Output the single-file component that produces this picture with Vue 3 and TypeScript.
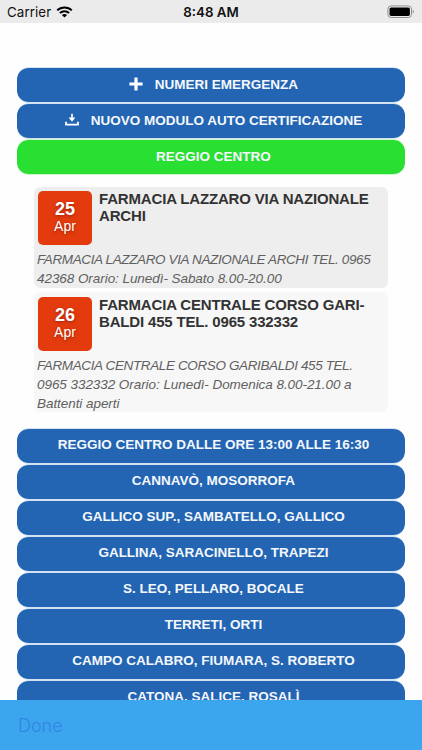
<script setup lang="ts">
interface Line {
  text: string
  tight?: boolean
}

interface Duty {
  day: string
  month: string
  title: string[]
  lines: Line[]
}

interface Action {
  label: string
  icon?: 'plus' | 'download'
  active?: boolean
}

const actions: Action[] = [
  { label: 'NUMERI EMERGENZA', icon: 'plus' },
  { label: 'NUOVO MODULO AUTO CERTIFICAZIONE', icon: 'download' },
  { label: 'REGGIO CENTRO', active: true },
]

const duties: Duty[] = [
  {
    day: '25',
    month: 'Apr',
    title: ['FARMACIA LAZZARO VIA NAZIONALE', 'ARCHI'],
    lines: [
      { text: 'FARMACIA LAZZARO VIA NAZIONALE ARCHI TEL. 0965', tight: true },
      { text: '42368 Orario: Lunedì- Sabato 8.00-20.00' },
    ],
  },
  {
    day: '26',
    month: 'Apr',
    title: ['FARMACIA CENTRALE CORSO GARI-', 'BALDI 455 TEL. 0965 332332'],
    lines: [
      { text: 'FARMACIA CENTRALE CORSO GARIBALDI 455 TEL.', tight: true },
      { text: '0965 332332 Orario: Lunedì- Domenica 8.00-21.00 a' },
      { text: 'Battenti aperti' },
    ],
  },
]

const areas: string[] = [
  'REGGIO CENTRO DALLE ORE 13:00 ALLE 16:30',
  'CANNAVÒ, MOSORROFA',
  'GALLICO SUP., SAMBATELLO, GALLICO',
  'GALLINA, SARACINELLO, TRAPEZI',
  'S. LEO, PELLARO, BOCALE',
  'TERRETI, ORTI',
  'CAMPO CALABRO, FIUMARA, S. ROBERTO',
  'CATONA, SALICE, ROSALÌ',
]
</script>

<template>
  <div class="screen">
    <header class="status">
      <div class="carrier">
        <span>Carrier</span>
        <svg class="wifi" width="17" height="12" viewBox="0 0 17 12">
          <path d="M1.2 4.4 C5.2 .5 11.8 .5 15.8 4.4" />
          <path d="M3.9 7.1 C6.5 4.7 10.5 4.7 13.1 7.1" />
          <path class="dot" d="M8.5 11.6 L5.9 9 C7.3 7.7 9.7 7.7 11.1 9 Z" />
        </svg>
      </div>
      <span class="time">8:48 AM</span>
      <svg class="battery" width="28" height="14" viewBox="0 0 28 14">
        <rect x=".9" y=".9" width="23.6" height="11.6" rx="3.2" fill="none" stroke="#929292" />
        <rect x="2.5" y="2.5" width="20.4" height="8.4" rx="1.6" />
        <path d="M25.7 4.8 C27.4 5.3 27.4 8.1 25.7 8.6 Z" fill="#999" />
      </svg>
    </header>

    <main class="content">
      <nav class="group">
        <button v-for="a in actions" :key="a.label" class="bar" :class="{ active: a.active }">
          <svg v-if="a.icon === 'plus'" class="icon" width="14" height="14" viewBox="0 0 14 14">
            <path d="M5.4 .4 H8.6 V5.4 H13.6 V8.6 H8.6 V13.6 H5.4 V8.6 H.4 V5.4 H5.4 Z" fill="#fff" />
          </svg>
          <svg v-if="a.icon === 'download'" class="icon" width="14" height="14" viewBox="0 0 14 14">
            <path d="M6.2 .8 H7.8 V4.6 H10.4 L7 8.8 L3.6 4.6 H6.2 Z" fill="#fff" />
            <path d="M1 8.8 V11.7 H13 V8.8" fill="none" stroke="#fff" stroke-width="1.8" />
          </svg>
          <span>{{ a.label }}</span>
        </button>
      </nav>

      <section class="duties">
        <article v-for="d in duties" :key="d.day" class="card">
          <div class="head">
            <div class="date">
              <strong>{{ d.day }}</strong>
              <span>{{ d.month }}</span>
            </div>
            <h2 class="title"><span v-for="t in d.title" :key="t">{{ t }}</span></h2>
          </div>
          <p class="info">
            <span v-for="l in d.lines" :key="l.text" :class="{ tight: l.tight }">{{ l.text }}</span>
          </p>
        </article>
      </section>

      <nav class="group">
        <button v-for="area in areas" :key="area" class="bar"><span>{{ area }}</span></button>
      </nav>
    </main>

    <footer class="toolbar"><span>Done</span></footer>
  </div>
</template>

<style>
body {
  margin: 0;
  background: #fff;
}
</style>

<style scoped>
.screen {
  width: 422px;
  height: 750px;
  display: flex;
  flex-direction: column;
  overflow: hidden;
  background: #fefefe;
  font-family: "Liberation Sans", Arial, sans-serif;
}
.status {
  flex: none;
  height: 23px;
  box-sizing: border-box;
  padding: 0 7px 0 7px;
  display: grid;
  grid-template-columns: 1fr auto 1fr;
  align-items: center;
  background: #ebebeb;
  font-family: Inter, sans-serif;
  color: #111;
}
.carrier {
  display: flex;
  align-items: center;
  gap: 5px;
  font-size: 13.3px;
  letter-spacing: 0.1px;
}
.wifi path {
  fill: none;
  stroke: #000;
  stroke-width: 2;
}
.wifi .dot {
  fill: #000;
  stroke: none;
}
.time {
  font-size: 13.3px;
  font-weight: 600;
}
.battery {
  justify-self: end;
}
.content {
  flex: 1;
  min-height: 0;
  overflow: hidden;
  padding: 44px 17px 0;
}
.group {
  display: flex;
  flex-direction: column;
}
.bar {
  flex: none;
  height: 36px;
  box-sizing: border-box;
  padding: 0 0 2px 5px;
  border: solid #fff;
  border-width: 1px 0;
  border-radius: 12px;
  background: linear-gradient(#2365b2, #2365b2) padding-box, #d3e2f3;
  border-color: transparent;
  display: flex;
  align-items: center;
  justify-content: center;
  color: #f4f8fd;
  font: bold 13.5px "Liberation Sans", Arial, sans-serif;
  white-space: nowrap;
}
.bar.active {
  background: linear-gradient(#29df31, #29df31) padding-box, #c9f7cb;
}
.icon {
  margin-right: 12px;
}
.duties {
  padding: 11.5px 17px 15.8px;
  display: flex;
  flex-direction: column;
  gap: 4.7px;
}
.card {
  box-sizing: border-box;
  padding: 4.5px 3px 0 4px;
  border-radius: 6px;
  background: #eee;
  height: 101px;
}
.card + .card {
  height: 120px;
  background: #f7f7f7;
}
.head {
  display: flex;
  gap: 7px;
  height: 59px;
}
.date {
  width: 54px;
  height: 54px;
  box-sizing: border-box;
  padding-top: 9px;
  border-radius: 5px;
  background: #e33a0e;
  color: #fff;
  display: flex;
  flex-direction: column;
  align-items: center;
  text-shadow: 0 1px 3px rgba(60, 0, 0, 0.4);
}
.date strong {
  font-size: 18px;
  line-height: 19px;
}
.date span {
  font-size: 14px;
  line-height: 15px;
}
.title {
  margin: -1px 0 0;
  font-size: 15px;
  line-height: 17px;
  letter-spacing: -0.17px;
  color: #333;
  white-space: nowrap;
}
.title span,
.info span {
  display: block;
}
.info {
  margin: 0 0 0 -1px;
  font-size: 13.5px;
  font-style: italic;
  line-height: 19px;
  letter-spacing: -0.06px;
  color: #606060;
  white-space: nowrap;
}
.info .tight {
  letter-spacing: -0.38px;
}
.toolbar {
  flex: none;
  height: 50px;
  box-sizing: border-box;
  padding: 0 18px;
  display: flex;
  align-items: center;
  background: #3ba5ee;
  color: #3285e3;
  font: 300 18px Inter, sans-serif;
}
</style>
